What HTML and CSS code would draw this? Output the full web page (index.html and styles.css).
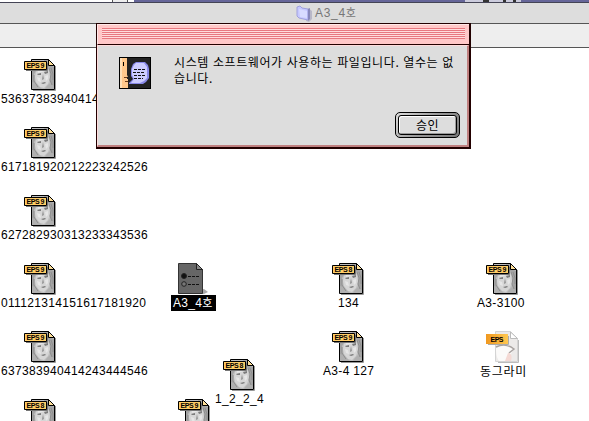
FILE: index.html
```
<!DOCTYPE html>
<html lang="ko">
<head>
    <meta charset="UTF-8">
    <title>A3_4호</title>
    <link rel="stylesheet" href="styles.css">
</head>
<body>
    <!-- Icon shapes -->
    <svg class="defs" width="0" height="0">
        <symbol id="eps-doc" viewBox="0 0 32 33">
            <path d="M9 31.500h22.500V7" fill="none" stroke="#999" stroke-width="1"/>
            <path d="M7.500 .500h17l6 6v24h-23z" fill="#bebebe" stroke="#000"/>
            <path d="M8 10h5l-3 5v6l2 9H8zM20 1h4l1 5 5 2v20l-3-2-1-5 1-6-2-6-4-3z" fill="#a4a4a4"/>
            <path d="M12 13l4-4 6-1 3 4 1 7-2 6-4 4-4-1-4-5-1-5z" fill="#d6d6d6"/>
            <path d="M14 10l5-1 3 2-4 2-4 1zM13 18l3 1 1 4-3-1zM21 17l3-1v4l-2 2z" fill="#e6e6e6"/>
            <path d="M8 23l3 1 3 3 4 3H8zM23 27l3-3 4 3v3h-9z" fill="#b0b0b0"/>
            <path d="M13 15l4-1v2h-3zM20 13l4-1v2l-3 1z" fill="#7c7c7c"/>
            <path d="M19 15l1 5-2 1v-1z" fill="#989898"/>
            <path d="M17 24l4-1 1 1-3 1z" fill="#7c7c7c"/>
            <path d="M25 9l2 6-1 6 2 5M10 16v6l4 6M27 9l2 6v6" fill="none" stroke="#8e8e8e"/>
            <path d="M24.500 .500v6h6z" fill="#ffe09a" stroke="#000"/>
            <path d="M2 11.500h21.500V4" fill="none" stroke="#777"/>
            <path d="M.500 2.500h22v8H.500z" fill="#ffcc66" stroke="#000"/>
        </symbol>
        <symbol id="settings-doc" viewBox="0 0 31 33">
            <path d="M4 31h22l4-2-4-3" fill="#aaa"/>
            <path d="M.500 .500h18l6 6v24H.500z" fill="#666" stroke="#333"/>
            <path d="M18.500 .500v6h6z" fill="#888" stroke="#222"/>
            <circle cx="6" cy="13" r="2.500" fill="#111" stroke="#222"/>
            <circle cx="6" cy="21" r="2.300" fill="#777" stroke="#222"/>
            <path d="M10 13.500h11M10 21.500h11" stroke="#111" stroke-dasharray="3 1"/>
        </symbol>
    </svg>

    <!-- Strip of the window behind -->
    <div class="back-strip">
        <div class="back-scroll"></div>
        <div class="back-frame"><span class="back-label"></span></div>
    </div>

    <div class="window">
        <div class="window-title">
            <svg class="folder" width="16" height="17" viewBox="0 0 16 17">
                <path d="M12 3l4 3v8l-3 3-3-1z" fill="#b8b8c8"/>
                <path d="M1 2l3-1 2 2 6 1v11L3 13 1 11z" fill="#c6c8ff" stroke="#a0a0dc"/>
                <path d="M12 4l2-1v11l-2 2z" fill="#8888bb"/>
                <path d="M3 4l8 2v7L4 12z" fill="#d8dbff"/>
            </svg>
            <span>A3_4<b class="ho">호</b></span>
        </div>
        <div class="window-info"></div>

        <div class="files">
            <div class="file col-1 row-1"><svg width="32" height="33"><use href="#eps-doc"/><text x="2.500" y="9" textLength="18">EPS 9</text></svg></div>
            <div class="file col-1 row-2"><svg width="32" height="33"><use href="#eps-doc"/><text x="2.500" y="9" textLength="18">EPS 9</text></svg></div>
            <div class="file col-1 row-3"><svg width="32" height="33"><use href="#eps-doc"/><text x="2.500" y="9" textLength="18">EPS 9</text></svg></div>
            <div class="file col-1 row-4"><svg width="32" height="33"><use href="#eps-doc"/><text x="2.500" y="9" textLength="18">EPS 9</text></svg></div>
            <div class="file col-1 row-5"><svg width="32" height="33"><use href="#eps-doc"/><text x="2.500" y="9" textLength="18">EPS 9</text></svg></div>
            <div class="file col-1 row-6"><svg width="32" height="33"><use href="#eps-doc"/><text x="2.500" y="9" textLength="18">EPS 8</text></svg></div>
            <p class="name long row-1">53637383940414</p>
            <p class="name long row-2">617181920212223242526</p>
            <p class="name long row-3">627282930313233343536</p>
            <p class="name long row-4">011121314151617181920</p>
            <p class="name long row-5">637383940414243444546</p>

            <div class="file settings"><svg width="31" height="33"><use href="#settings-doc"/></svg></div>
            <p class="name selected">A3_4<b class="ho">호</b></p>
            <div class="file loose"><svg width="32" height="33"><use href="#eps-doc"/><text x="2.500" y="9" textLength="18">EPS 8</text></svg></div>
            <p class="name loose-name">1_2_2_4</p>
            <div class="file col-2 row-6"><svg width="32" height="33"><use href="#eps-doc"/><text x="2.500" y="9" textLength="18">EPS 9</text></svg></div>

            <div class="file col-3 row-4"><svg width="32" height="33"><use href="#eps-doc"/><text x="2.500" y="9" textLength="18">EPS 8</text></svg></div>
            <p class="name name-134 row-4">134</p>
            <div class="file col-3 row-5"><svg width="32" height="33"><use href="#eps-doc"/><text x="2.500" y="9" textLength="18">EPS 9</text></svg></div>
            <p class="name name-127 row-5">A3-4 127</p>

            <div class="file col-4 row-4"><svg width="32" height="33"><use href="#eps-doc"/><text x="2.500" y="9" textLength="18">EPS 9</text></svg></div>
            <p class="name name-3100 row-4">A3-3100</p>
            <div class="file col-4 row-5">
                <svg width="34" height="33" viewBox="0 0 34 33">
                    <linearGradient id="gold"><stop stop-color="#f09820"/><stop offset="1" stop-color="#ffc850"/></linearGradient>
                    <path d="M12 31.500h20.500V9" fill="none" stroke="#bbb"/>
                    <path d="M9.500 .500h15l7 7v23h-22z" fill="#eceae9" stroke="#d4d4d4"/>
                    <path d="M24.500 1v6.500h7z" fill="#fff" stroke="#bbb"/>
                    <path d="M10 17c5-4 13-4 18 0l-3 6-5 7h-7c-3-4-3-9-3-13z" fill="#fbfaf9"/>
                    <path d="M10 16c6-3 13-2 18 2l-5 4" fill="none" stroke="#a8a3a1" stroke-width="1.500"/>
                    <path d="M22 22c4 0 4 4 3 8h-6z" fill="#f4d9d4"/>
                    <path d="M2 13.500h20.500V5" fill="none" stroke="#aaa"/>
                    <path d="M0 3h22v10H0z" fill="url(#gold)"/>
                    <text x="4.500" y="10.500" textLength="13">EPS</text>
                </svg>
            </div>
            <p class="name korean row-5">동그라미</p>
        </div>
    </div>

    <!-- Alert -->
    <div class="dialog">
        <div class="dialog-title"><div class="stripes"></div></div>
        <div class="dialog-body">
            <svg class="alert-icon" width="32" height="32" viewBox="0 0 32 32">
                <path d="M0 0h32v32H0z" fill="#000"/>
                <path d="M1 1h30v30H1z" fill="#222"/>
                <path d="M1 1h7v17l1 2H8v2h1v2H6v1h3v6H1z" fill="#ffc88c"/>
                <path d="M1 1h2v30H1z" fill="#ffe0b8"/>
                <path d="M4 5h1v4H4z" fill="#000"/>
                <path d="M5 20h3v1H5zM6 24h3v1H6z" fill="#6a3a18"/>
                <path d="M17 5h9l3 3 1 4v9l-3 4-3 2H10v-1l4-4-2-3v-7l2-5z" fill="#8888e8"/>
                <path d="M17 6h8l3 4v11l-3 3-4 2H12l3-4-2-4v-6l2-4z" fill="#ccccff"/>
                <path d="M15 12.500h11M14 15.500h11M15 18.500h11M15 21.500h9" stroke="#111" stroke-dasharray="3 1"/>
            </svg>
            <p class="message"><span class="line-1">시스템 소프트웨어가 사용하는 파일입니다. 열수는 없</span><br><span class="line-2">습니다.</span></p>
            <button class="ok"><span>승인</span></button>
        </div>
    </div>
</body>
</html>
```
FILE: styles.css
```
body {
    margin: 0;
    width: 589px;
    height: 421px;
    overflow: hidden;
    position: relative;
    background: #fff;
    color: #000;
    font-family: "Liberation Sans", "Noto Sans CJK KR", sans-serif;
    font-size: 12px;
}

p {
    margin: 0;
}

.defs {
    position: absolute;
}

.back-strip {
    display: flex;
    height: 2px;
    padding-left: 112px;
}

.back-scroll {
    width: 14px;
    margin-right: 6px;
    border-left: 1px solid #555;
    border-right: 1px solid #555;
    background: #eee;
}

.back-frame {
    flex: 1;
    background: #666699;
}

.back-label {
    display: block;
    width: 56px;
    height: 2px;
    margin-left: 331px;
    background: linear-gradient(90deg, #ccccdd 18px, #333 18px, #333 24px, #ccccdd 24px, #ccccdd 38px, #333 38px, #333 41px, #ccccdd 41px, #ccccdd 48px, #333 48px, #333 51px, #ccccdd 51px);
}

.window-title {
    box-sizing: border-box;
    height: 22px;
    display: flex;
    align-items: center;
    justify-content: center;
    gap: 3px;
    padding-left: 63px;
    border-top: 1px solid #444455;
    border-bottom: 1px solid #555;
    background: #ddd;
    color: #777;
    letter-spacing: 0.7px;
}

.ho {
    font-family: "Noto Sans CJK KR", sans-serif;
    font-size: 11px;
    font-weight: normal;
    line-height: 1;
    letter-spacing: 0;
}

.window-info {
    height: 23px;
    background: #eee;
    border-bottom: 1px solid #555;
}

.file,
.name {
    position: absolute;
}

.file svg {
    display: block;
    overflow: visible;
}

.file text {
    font-family: "Liberation Sans", sans-serif;
    font-size: 7px;
    font-weight: bold;
}

.name {
    line-height: 15px;
    white-space: nowrap;
    letter-spacing: 0.33px;
}

.col-1 { left: 24px; }
.col-2 { left: 178px; }
.col-3 { left: 332px; }
.col-4 { left: 486px; }

.file.row-1 { top: 59px; }
.file.row-2 { top: 127px; }
.file.row-3 { top: 195px; }
.file.row-4 { top: 263px; }
.file.row-5 { top: 331px; }
.file.row-6 { top: 399px; }

.name.row-1 { top: 92px; }
.name.row-2 { top: 160px; }
.name.row-3 { top: 228px; }
.name.row-4 { top: 296px; }
.name.row-5 { top: 364px; }

.long { left: 1px; }
.name-134 { left: 338px; }
.name-127 { left: 323px; }
.name-3100 { left: 477px; }

.name.korean {
    left: 480px;
    top: 363px;
    font-family: "Noto Sans CJK KR", sans-serif;
    letter-spacing: 0.7px;
}

.settings {
    left: 178px;
    top: 263px;
}

.selected {
    left: 171px;
    top: 295px;
    width: 43px;
    height: 16px;
    line-height: 16px;
    padding-left: 2px;
    background: #000;
    color: #fff;
}

.loose {
    left: 223px;
    top: 359px;
}

.loose-name {
    left: 215px;
    top: 392px;
}

.dialog {
    position: absolute;
    left: 96px;
    top: 23px;
    box-sizing: border-box;
    width: 375px;
    height: 126px;
    border: 1px solid #200;
    border-right-width: 2px;
    border-bottom-width: 2px;
}

.dialog-title {
    height: 21px;
    box-sizing: border-box;
    padding: 3px 4px 0;
    background: #ffc8c8;
    border-top: 1px solid #ffe8e8;
    border-left: 1px solid #ffe8e8;
    border-bottom: 1px solid #200;
}

.stripes {
    height: 11px;
    background: repeating-linear-gradient(#e87880 0, #e87880 1px, #ffdcdc 1px, #ffdcdc 2px);
}

.dialog-body {
    display: flex;
    position: relative;
    box-sizing: border-box;
    height: 102px;
    padding: 11px 0 0 21px;
    background: #ddd;
    border: 1px solid #ffdcdc;
    border-right: 2px solid #c08080;
    border-bottom: 2px solid #c08080;
}

.alert-icon {
    flex: none;
}

.message {
    margin: -3px 0 0 23px;
    font-family: "Noto Sans CJK KR", sans-serif;
    line-height: 16px;
    white-space: nowrap;
}

.line-1,
.line-2 {
    letter-spacing: 0.6px;
}

.ok {
    position: absolute;
    right: 7px;
    bottom: 7px;
    width: 65px;
    height: 26px;
    padding: 2px;
    border: 1px solid #000;
    border-radius: 5px;
    background: linear-gradient(135deg, #ddd, #999 50%, #777);
    font-family: "Noto Sans CJK KR", sans-serif;
    font-size: 12px;
    color: #000;
    letter-spacing: 0.5px;
}

.ok span {
    display: block;
    box-sizing: border-box;
    height: 20px;
    line-height: 17px;
    border: 1px solid #000;
    border-radius: 3px;
    background: #ddd;
    box-shadow: inset 1px 1px #fff, inset -1px -1px #999;
}
```
